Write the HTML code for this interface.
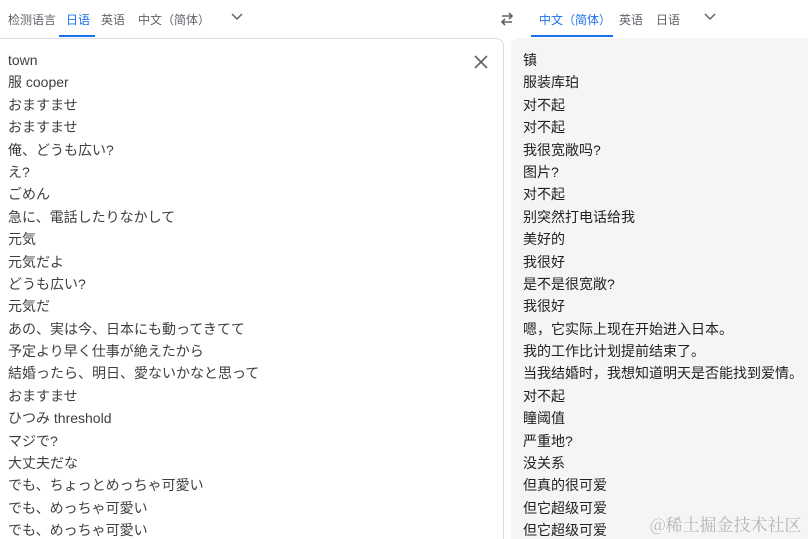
<!DOCTYPE html>
<html><head><meta charset="utf-8"><style>
html,body{margin:0;width:808px;height:539px;overflow:hidden}
body{background:#fff;font-family:"Liberation Sans","Noto Sans CJK SC",sans-serif;position:relative}
.t{position:absolute;top:11px;font-size:12px;color:#5f6368;white-space:nowrap}
.b{color:#1a73e8}
.u{position:absolute;top:35px;height:2px;background:#1a73e8}
.left{position:absolute;left:-1px;top:38px;width:503px;height:520px;border:1px solid #dadce0;border-radius:0 8px 0 0;background:#fff}
.right{position:absolute;left:511px;top:38px;width:297px;height:501px;background:#f5f5f5;border-radius:8px 0 0 0}
.lines{position:absolute;top:49px;font-size:14px;line-height:22.4px;white-space:nowrap}
.lines div{height:22.4px}
</style></head><body>
<div class="t" style="left:8px">检测语言</div>
<div class="t b" style="left:66px">日语</div>
<div class="t" style="left:101px">英语</div>
<div class="t" style="left:138px">中文（简体）</div>
<svg style="position:absolute;left:231px;top:13px" width="12" height="8"><path d="M1 1l5 5 5-5" stroke="#5f6368" stroke-width="1.5" fill="none"/></svg>
<div class="u" style="left:59px;width:36px"></div>
<svg style="position:absolute;left:499px;top:12px" width="16" height="14"><path d="M3 4h10M10 1l3 3-3 3M13 10H3M6 7l-3 3 3 3" stroke="#5f6368" stroke-width="1.6" fill="none"/></svg>
<div class="t b" style="left:539px">中文（简体）</div>
<div class="t" style="left:619px">英语</div>
<div class="t" style="left:656px">日语</div>
<svg style="position:absolute;left:704px;top:13px" width="12" height="8"><path d="M1 1l5 5 5-5" stroke="#5f6368" stroke-width="1.5" fill="none"/></svg>
<div class="u" style="left:531px;width:82px"></div>
<div class="left"></div>
<div class="right"></div>
<svg style="position:absolute;left:474px;top:55px" width="14" height="14"><path d="M1 1l12 12M13 1L1 13" stroke="#5f6368" stroke-width="1.6"/></svg>
<div class="lines" style="left:8px;color:#3c4043">
<div>town</div><div>服 cooper</div><div>おますませ</div><div>おますませ</div><div>俺、どうも広い?</div><div>え?</div><div>ごめん</div><div>急に、電話したりなかして</div><div>元気</div><div>元気だよ</div><div>どうも広い?</div><div>元気だ</div><div>あの、実は今、日本にも動ってきてて</div><div>予定より早く仕事が絶えたから</div><div>結婚ったら、明日、愛ないかなと思って</div><div>おますませ</div><div>ひつみ threshold</div><div>マジで?</div><div>大丈夫だな</div><div>でも、ちょっとめっちゃ可愛い</div><div>でも、めっちゃ可愛い</div><div>でも、めっちゃ可愛い</div>
</div>
<div class="lines" style="left:523px;color:#202124">
<div>镇</div><div>服装库珀</div><div>对不起</div><div>对不起</div><div>我很宽敞吗?</div><div>图片?</div><div>对不起</div><div>别突然打电话给我</div><div>美好的</div><div>我很好</div><div>是不是很宽敞?</div><div>我很好</div><div>嗯，它实际上现在开始进入日本。</div><div>我的工作比计划提前结束了。</div><div>当我结婚时，我想知道明天是否能找到爱情。</div><div>对不起</div><div>瞳阈值</div><div>严重地?</div><div>没关系</div><div>但真的很可爱</div><div>但它超级可爱</div><div>但它超级可爱</div>
</div>
<div style="position:absolute;left:650px;top:511px;font-size:17px;color:#b4b4b4;font-family:'Noto Serif CJK SC',serif;white-space:nowrap">@稀土掘金技术社区</div>
</body></html>
